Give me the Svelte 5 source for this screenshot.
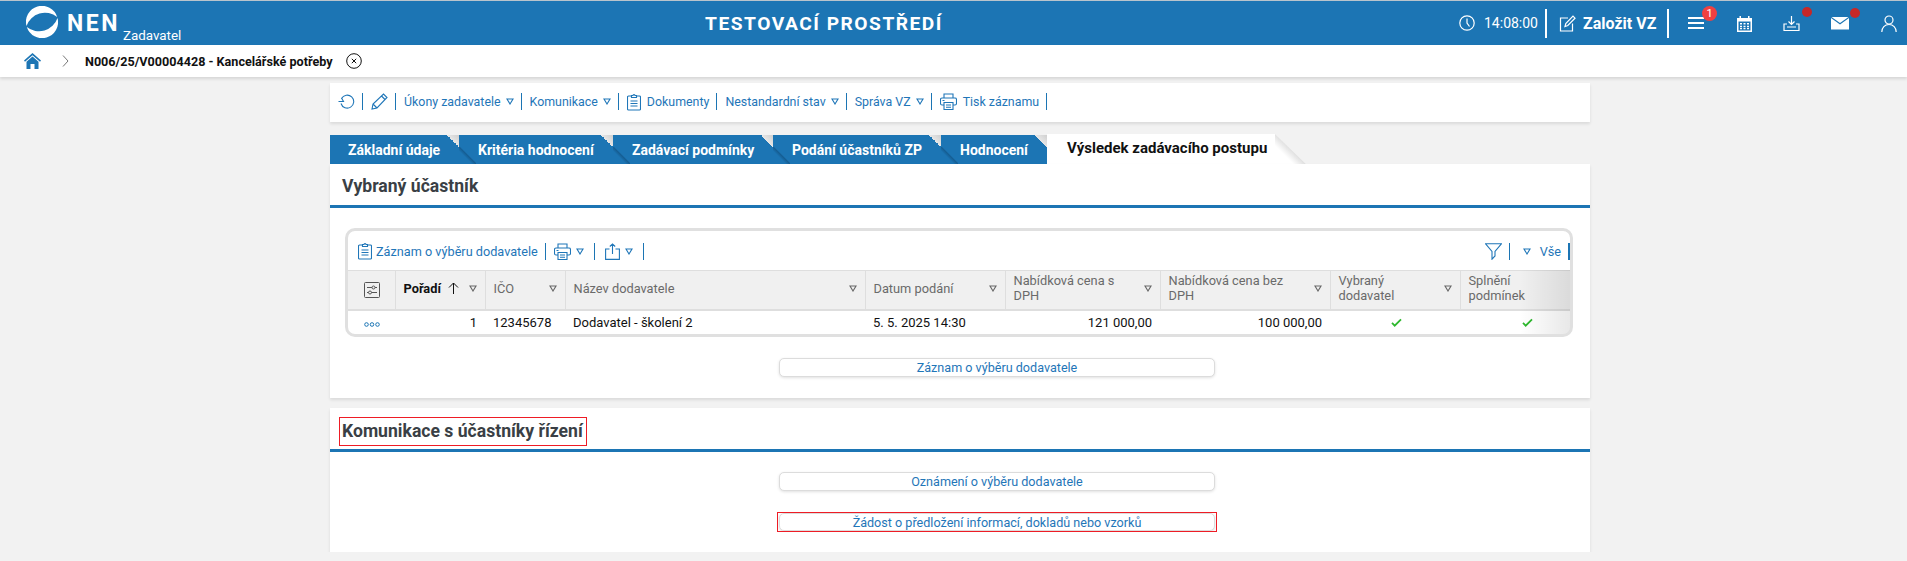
<script lang="ts">
  const tabs = ['Základní údaje', 'Kritéria hodnocení', 'Zadávací podmínky', 'Podání účastníků ZP', 'Hodnocení'];

  const columns = [
    { label: 'Pořadí', cls: 'order', filter: true, wrap: 120 },
    { label: 'IČO', filter: true, wrap: 120 },
    { label: 'Název dodavatele', filter: true, wrap: 200 },
    { label: 'Datum podání', filter: true, wrap: 120 },
    { label: 'Nabídková cena s DPH', filter: true, wrap: 116 },
    { label: 'Nabídková cena bez DPH', filter: true, wrap: 120 },
    { label: 'Vybraný dodavatel', filter: true, wrap: 90 },
    { label: 'Splnění podmínek', filter: false, wrap: 80 },
  ];
</script>

{#snippet tri()}
  <svg class="tri" viewBox="0 0 8 7" width="8" height="7"><path d="M1 1h6L4 6z" fill="none" stroke="currentColor" stroke-width="1.1" /></svg>
{/snippet}

{#snippet clipboard()}
  <svg class="lead" viewBox="0 0 14 18" width="14" height="18" fill="none" stroke="currentColor" stroke-width="1.1">
    <path d="M4.500 3H1.500a1 1 0 0 0-1 1v12a1 1 0 0 0 1 1h11a1 1 0 0 0 1-1V4a1 1 0 0 0-1-1H9.500" />
    <path d="M4.500 4.500V2.500H6a1 1 0 0 1 2 0h1.500v2z" />
    <path d="M3.500 8h7M3.500 10.500h7M3.500 13h7" />
  </svg>
{/snippet}

{#snippet printer()}
  <svg class="lead" viewBox="0 0 17 17" width="17" height="17" fill="none" stroke="currentColor" stroke-width="1.1">
    <path d="M4 5V1h9v4" />
    <path d="M4 12H2a1.500 1.500 0 0 1-1.500-1.500v-4A1.500 1.500 0 0 1 2 5h13a1.500 1.500 0 0 1 1.500 1.500v4A1.500 1.500 0 0 1 15 12h-2" />
    <path d="M4 9.500h9v7H4zM6 12h5M6 14.300h5M2.500 7.500h2" />
  </svg>
{/snippet}

{#snippet check()}
  <svg viewBox="0 0 12 10" width="11" height="9"><path d="M1 5.500l3 3L11 1.500" fill="none" stroke="#2eb82e" stroke-width="2" /></svg>
{/snippet}

<header class="topbar">
  <div class="brand">
    <svg class="logo" viewBox="0 0 32 32" width="32" height="32" fill="#fff">
      <path d="M0.500 20A16 16 0 0 1 31.200 11A19.500 19.500 0 0 0 0.500 20z" />
      <path d="M0.500 20A16 16 0 0 1 31.200 11A19.500 19.500 0 0 0 0.500 20z" transform="rotate(180 16 16)" />
    </svg>
    <span class="nen">NEN</span>
    <span class="role">Zadavatel</span>
  </div>
  <div class="env">TESTOVACÍ PROSTŘEDÍ</div>
  <div class="actions">
    <svg class="clock" viewBox="0 0 16 16" width="16" height="16" fill="none" stroke="#fff" stroke-width="1.2">
      <circle cx="8" cy="8" r="7.200" /><path d="M8 3.500V8l2.500 3.500" />
    </svg>
    <span class="time">14:08:00</span>
    <i class="bar"></i>
    <svg class="edit" viewBox="0 0 17 17" width="17" height="17" fill="none" stroke="#fff" stroke-width="1.200">
      <path d="M9 3H1.500v13h12V8.500" /><path d="M6 11.500l.8-3L14 1.200l2 2L8.800 10.500z" />
    </svg>
    <span class="create">Založit VZ</span>
    <i class="bar"></i>
    <span class="menu">
      <svg viewBox="0 0 16 14" width="16" height="14" fill="#fff"><path d="M0 1h16v2H0zM0 6h16v2H0zM0 11h16v2H0z" /></svg>
      <b class="badge">1</b>
    </span>
    <svg class="cal" viewBox="0 0 17 17" width="17" height="17" fill="#fff">
      <path d="M1 3h2.500V1h1.500v2h7V1h1.500v2H16v14H1zM2.500 6.500v9h12v-9z" />
      <path d="M4 8h2v1.500H4zM7.500 8h2v1.500h-2zM11 8h2v1.500h-2zM4 10.800h2v1.500H4zM7.500 10.800h2v1.500h-2zM11 10.800h2v1.500h-2zM4 13h2v1.300H4zM7.500 13h2v1.300h-2zM11 13h2v1.300h-2z" />
    </svg>
    <span class="dotted first">
      <svg viewBox="0 0 17 17" width="17" height="17" fill="none" stroke="#fff" stroke-width="1.200">
        <path d="M8.500 1v8M5.500 6.500l3 3 3-3" /><path d="M4 9H1v6.500h15V9h-3M4 12h9" />
      </svg>
      <b class="dot"></b>
    </span>
    <span class="dotted second">
      <svg viewBox="0 0 18 13" width="18" height="13"><path d="M0 1l9 6.500L18 1v11.500H0z" fill="#fff" /><path d="M.5 0h17L9 6z" fill="#fff" /></svg>
      <b class="dot"></b>
    </span>
    <svg class="user" viewBox="0 0 16 17" width="16" height="17" fill="none" stroke="#fff" stroke-width="1.200">
      <circle cx="8" cy="5" r="4" /><path d="M.8 17c0-4.500 3-7.500 7.200-7.500s7.200 3 7.200 7.500" />
    </svg>
  </div>
</header>

<nav class="crumbs">
  <svg class="home" viewBox="0 0 17 16" width="17" height="16" fill="#1c75b4">
    <path d="M8.500 0L17 7.500l-1 1.200-7.500-6.500L1 8.700 0 7.500z" /><path d="M2.500 8.800L8.500 3.600l6 5.200V16H10.500v-5h-4v5H2.500z" />
  </svg>
  <svg class="chev" viewBox="0 0 7 12" width="7" height="12"><path d="M1 .5L6 6l-5 5.500" fill="none" stroke="#777" /></svg>
  <span class="path">N006/25/V00004428 - Kancelářské potřeby</span>
  <svg class="close" viewBox="0 0 16 16" width="16" height="16" fill="none" stroke="#111">
    <circle cx="8" cy="8" r="7.300" /><path d="M5.800 5.800l4.400 4.400M10.200 5.800l-4.400 4.400" />
  </svg>
</nav>

<main class="page">
  <div class="toolbar card">
    <svg viewBox="0 0 17 15" width="17" height="15" fill="none" stroke="currentColor" stroke-width="1.100">
      <path d="M3.500 4.500A6.500 6.500 0 1 1 3 9.500" /><path d="M0.500 7.500h5l-2-3.500" />
    </svg>
    <i class="sep"></i>
    <svg viewBox="0 0 17 17" width="17" height="17" fill="none" stroke="currentColor" stroke-width="1.100">
      <path d="M1 16l1-5L12.500 1 16 4.500 6 15zM2 11l4 4M10.500 3l3.500 3.500" />
    </svg>
    <i class="sep"></i>
    <span>Úkony zadavatele</span>{@render tri()}
    <i class="sep"></i>
    <span>Komunikace</span>{@render tri()}
    <i class="sep"></i>
    {@render clipboard()}<span>Dokumenty</span>
    <i class="sep"></i>
    <span>Nestandardní stav</span>{@render tri()}
    <i class="sep"></i>
    <span>Správa VZ</span>{@render tri()}
    <i class="sep"></i>
    {@render printer()}<span>Tisk záznamu</span>
    <i class="sep"></i>
  </div>

  <div class="tabs">
    {#each tabs as tab}
      <div class="tab">{tab}</div>
    {/each}
    <div class="tab active">Výsledek zadávacího postupu</div>
  </div>

  <section class="card panel first-panel">
    <h2 class="head"><span>Vybraný účastník</span></h2>
    <div class="frame">
      <div class="grid-tools">
        {@render clipboard()}<span>Záznam o výběru dodavatele</span>
        <i class="sep"></i>
        {@render printer()}{@render tri()}
        <i class="sep wide"></i>
        <svg viewBox="0 0 15 17" width="15" height="17" fill="none" stroke="currentColor" stroke-width="1.100">
          <path d="M4.500 6H.6v10.400h13.800V6h-3.900M7.500 11V1M4.800 3.500L7.500 1l2.700 2.500" />
        </svg>{@render tri()}
        <i class="sep wide"></i>
        <div class="tools-end">
          <svg viewBox="0 0 17 17" width="17" height="17" fill="none" stroke="currentColor" stroke-width="1.100">
            <path d="M.6.800h15.800L10 8.500V13l-3 3.200V8.500z" />
          </svg>
          <i class="sep"></i>
          {@render tri()}
          <span class="all">Vše</span>
          <i class="sep thick"></i>
        </div>
      </div>
      <div class="grid-wrap">
        <table>
          <colgroup>
            <col style="width: 47px" /><col style="width: 90px" /><col style="width: 80px" /><col style="width: 300px" />
            <col style="width: 140px" /><col style="width: 155px" /><col style="width: 170px" /><col style="width: 130px" /><col style="width: 110px" />
          </colgroup>
          <thead>
            <tr>
              <th class="cfg">
                <svg viewBox="0 0 16 16" width="16" height="16" fill="none" stroke="#555">
                  <rect x=".5" y=".5" width="15" height="15" rx="1" /><path d="M3 5.500h10M3 10.500h10" /><circle cx="9.500" cy="5.500" r="1.500" fill="#f0f0f0" /><circle cx="6" cy="10.500" r="1.500" fill="#f0f0f0" />
                </svg>
              </th>
              {#each columns as col}
                <th class={col.cls}>
                  <div class="th-in">
                    <span class="th-label" style="max-width: {col.wrap}px">{col.label}</span>
                    {#if col.cls === 'order'}
                      <svg class="sort" viewBox="0 0 11 12" width="11" height="12" fill="none" stroke="#111"><path d="M5.500 12V1M1 5.500L5.500 1 10 5.500" /></svg>
                    {/if}
                    {#if col.filter}{@render tri()}{/if}
                  </div>
                </th>
              {/each}
            </tr>
          </thead>
          <tbody>
            <tr>
              <td class="more"><svg viewBox="0 0 16 5" width="16" height="5" fill="none" stroke="#1c75b4"><circle cx="2.500" cy="2.500" r="1.800" /><circle cx="8" cy="2.500" r="1.800" /><circle cx="13.500" cy="2.500" r="1.800" /></svg></td>
              <td class="num">1</td>
              <td>12345678</td>
              <td>Dodavatel - školení 2</td>
              <td>5. 5. 2025 14:30</td>
              <td class="num">121 000,00</td>
              <td class="num">100 000,00</td>
              <td class="mid">{@render check()}</td>
              <td class="mid last">{@render check()}</td>
            </tr>
          </tbody>
        </table>
        <div class="fade"></div>
      </div>
    </div>
    <div class="btn-row"><button type="button">Záznam o výběru dodavatele</button></div>
  </section>

  <section class="card panel second-panel">
    <h2 class="head"><span class="marked">Komunikace s účastníky řízení</span></h2>
    <div class="btn-row"><button type="button">Oznámení o výběru dodavatele</button></div>
    <div class="btn-row marked-row">
      <div class="marked-btn"><button type="button">Žádost o předložení informací, dokladů nebo vzorků</button></div>
    </div>
  </section>
</main>

<style>
  :global(body) {
    background: #f2f2f2;
    font-family: Roboto, "Liberation Sans", sans-serif;
    font-size: 13px;
    overflow: hidden;
  }

  .topbar {
    height: 44px;
    border-top: 1px solid #b9c4cc;
    background: #1c75b4;
    color: #fff;
    display: flex;
    align-items: center;
    position: relative;
  }

  .brand {
    display: flex;
    align-items: flex-start;
    height: 44px;
    padding-left: 26px;
  }

  .logo {
    margin-top: 5px;
  }

  .nen {
    margin: 9px 0 0 9px;
    font-size: 23px;
    line-height: 28px;
    font-weight: 700;
    letter-spacing: 2.500px;
  }

  .role {
    margin: 27px 0 0 3px;
    font-size: 13.400px;
    line-height: 16px;
  }

  .env {
    position: absolute;
    left: 700px;
    width: 248px;
    text-align: center;
    font-size: 19.200px;
    font-weight: 700;
    letter-spacing: 1.500px;
    white-space: nowrap;
  }

  .actions {
    margin-left: auto;
    display: flex;
    align-items: center;
    padding-right: 10px;
  }

  .time {
    margin: 0 11px 0 9px;
    font-size: 14px;
    width: 50px;
  }

  .bar {
    width: 2px;
    height: 29px;
    background: #fff;
  }

  .edit {
    margin-left: 12px;
  }

  .create {
    margin: 0 11px 0 7px;
    font-size: 16px;
    font-weight: 700;
    width: 73px;
    white-space: nowrap;
  }

  .menu,
  .dotted {
    position: relative;
    display: flex;
  }

  .menu {
    margin-left: 19px;
  }

  .badge {
    position: absolute;
    left: 14px;
    top: -10px;
    width: 15px;
    height: 15px;
    border-radius: 50%;
    background: #f04040;
    font-size: 11px;
    font-weight: 400;
    line-height: 15px;
    text-align: center;
  }

  .cal {
    margin-left: 32px;
  }

  .dotted.first {
    margin-left: 30px;
  }

  .dotted.second {
    margin-left: 31px;
  }

  .dot {
    position: absolute;
    top: -8px;
    left: 19px;
    width: 10px;
    height: 10px;
    border-radius: 50%;
    background: #c62828;
  }

  .dotted.second .dot {
    left: 19px;
    top: -9px;
  }

  .user {
    margin-left: 32px;
  }

  .crumbs {
    height: 32px;
    background: #fff;
    display: flex;
    align-items: center;
    padding-left: 24px;
    box-shadow: 0 2px 3px rgba(0, 0, 0, 0.12);
    position: relative;
  }

  .chev {
    margin-left: 21px;
  }

  .path {
    margin-left: 16px;
    font-size: 12.600px;
    font-weight: 700;
    color: #111;
    width: 247px;
    white-space: nowrap;
  }

  .close {
    margin-left: 14px;
  }

  .page {
    width: 1260px;
    margin-left: 330px;
    padding-top: 6px;
  }

  .card {
    background: #fff;
    box-shadow: 0 2px 3px rgba(0, 0, 0, 0.1);
  }

  .toolbar {
    height: 39px;
    box-sizing: border-box;
    display: flex;
    align-items: center;
    padding: 0 0 2px 8px;
    color: #1f76b8;
    font-size: 12.400px;
  }

  .sep {
    width: 1px;
    height: 17px;
    margin: 0 8px 0 7px;
    background: #1c75b4;
    flex: none;
  }

  .sep.wide {
    margin: 0 10px;
  }

  .sep.thick {
    width: 2px;
    margin-right: 0;
  }

  .toolbar span,
  .grid-tools span {
    white-space: nowrap;
  }

  .lead {
    margin-right: 6px;
    flex: none;
  }

  .grid-tools .lead {
    margin-right: 0;
  }

  .grid-tools .lead:first-child {
    margin-right: 4px;
  }

  .toolbar .tri {
    margin-left: 5px;
  }

  .tabs {
    display: flex;
    height: 29px;
    margin-top: 13px;
  }

  .tab {
    position: relative;
    box-sizing: border-box;
    height: 29px;
    background: #1c75b4;
    color: #fff;
    font-size: 14px;
    font-weight: 700;
    line-height: 30px;
    padding: 0 0 0 18px;
    white-space: nowrap;
  }

  .tab:nth-child(1) { width: 129px; }
  .tab:nth-child(2) { width: 154px; padding-left: 19px; }
  .tab:nth-child(3) { width: 160px; padding-left: 19px; }
  .tab:nth-child(4) { width: 168px; padding-left: 19px; }
  .tab:nth-child(5) { width: 106px; padding-left: 19px; }

  /* folded corner */
  .tab::after {
    content: '';
    position: absolute;
    right: 0;
    top: 0;
    width: 12px;
    height: 12px;
    background: linear-gradient(to top right, transparent 50%, #e6e6e6 50%, #cfcfcf 100%);
  }

  /* shadow running down from the fold */
  .tab::before {
    content: '';
    position: absolute;
    left: 100%;
    top: 12px;
    width: 17px;
    height: 17px;
    z-index: 1;
    background: linear-gradient(to top right, transparent 38%, rgba(10, 60, 100, 0.4) 50%, transparent 56%);
  }

  .tab:nth-child(5)::before {
    display: none;
  }

  .tab.active {
    background: #fff;
    width: 259px;
    height: 30px;
    margin-top: -1px;
    padding-left: 20px;
    color: #111;
    font-size: 15px;
    line-height: 28px;
    clip-path: polygon(0 0, 228px 0, 100% 100%, 0 100%);
  }

  .tab.active::before {
    display: block;
    left: auto;
    right: 0;
    top: 0;
    width: 31px;
    height: 30px;
    background: linear-gradient(225deg, #e0e0e0 50%, #fff 70%);
  }

  .tab.active::after {
    display: none;
  }

  .panel {
    position: relative;
  }

  .first-panel {
    height: 234px;
  }

  .second-panel {
    height: 144px;
    margin-top: 10px;
  }

  .head {
    margin: 0;
    box-sizing: border-box;
    border-bottom: 3px solid #1c75b4;
    display: flex;
    align-items: flex-start;
    font-size: 17.600px;
    font-weight: 700;
    color: #3a3f45;
    line-height: 21px;
  }

  .first-panel .head {
    padding: 12px 0 0 12px;
    height: 44px;
  }

  .second-panel .head {
    height: 44px;
    padding: 9px 0 0 9px;
  }

  .marked {
    border: 1px solid #ee1c25;
    padding: 3px 3px 3px 2px;
  }

  .frame {
    margin: 20px 17px 0 15px;
    height: 109px;
    box-sizing: border-box;
    border: 3px solid #e0e0e0;
    border-radius: 10px;
    overflow: hidden;
  }

  .grid-tools {
    height: 39px;
    box-sizing: border-box;
    padding: 1px 0 0 10px;
    display: flex;
    align-items: center;
    color: #1f76b8;
    font-size: 12.700px;
  }

  .grid-tools .tri {
    margin-left: 5px;
  }

  .tools-end {
    margin-left: auto;
    display: flex;
    align-items: center;
  }

  .grid-tools .all {
    margin-left: 9px;
  }

  .grid-wrap {
    position: relative;
    width: 1222px;
  }

  table {
    table-layout: fixed;
    width: 1222px;
    border-collapse: collapse;
    font-size: 13px;
  }

  thead tr {
    height: 39px;
    background: #f0f0f0;
    border-top: 1px solid #dedede;
    border-bottom: 2px solid #dedede;
  }

  th {
    padding: 0 8px 3px;
    border-left: 1px solid #dedede;
    text-align: left;
    font-weight: 400;
    font-size: 12.800px;
    color: #6a6a6a;
    line-height: 15px;
  }

  th:first-child {
    border-left: 0;
  }

  th.cfg {
    padding: 3px 0 0 1px;
    text-align: center;
  }

  .cfg svg {
    display: inline-block;
  }

  .th-in {
    display: flex;
    align-items: center;
    justify-content: space-between;
  }

  .order {
    color: #111;
    font-weight: 700;
  }

  .sort {
    margin-left: auto;
  }

  .order .tri {
    margin-left: 10px;
  }

  .th-in .tri {
    color: #666;
    flex: none;
  }

  tbody tr {
    height: 25px;
  }

  td {
    padding: 0 8px;
    color: #111;
    white-space: nowrap;
  }

  td.more {
    text-align: center;
  }

  .more svg {
    display: inline-block;
  }

  td.num {
    text-align: right;
  }

  td.mid {
    text-align: center;
    padding-left: 10px;
  }

  td.mid.last {
    padding-left: 32px;
  }

  .mid :global(svg) {
    display: inline-block;
  }

  .fade {
    position: absolute;
    top: 0;
    right: 0;
    bottom: 0;
    width: 50px;
    background: linear-gradient(to right, transparent, rgba(0, 0, 0, 0.09));
  }

  .btn-row {
    display: flex;
    padding-left: 449px;
    margin-top: 21px;
  }

  .second-panel .btn-row {
    margin-top: 20px;
  }

  .second-panel .marked-row {
    margin-top: 21px;
    padding-left: 447px;
  }

  button {
    width: 436px;
    height: 19px;
    padding: 0;
    background: #fff;
    border: 1px solid #dcdcdc;
    border-radius: 5px;
    box-shadow: 0 1px 3px rgba(0, 0, 0, 0.12);
    color: #1f76b8;
    font-family: inherit;
    font-size: 12.600px;
    line-height: 17px;
  }

  .marked-btn {
    border: 1px solid #ee1c25;
    padding: 0 1px;
    height: 18px;
    overflow: hidden;
    display: flex;
  }

  .marked-btn button {
    height: 18px;
  }
</style>
